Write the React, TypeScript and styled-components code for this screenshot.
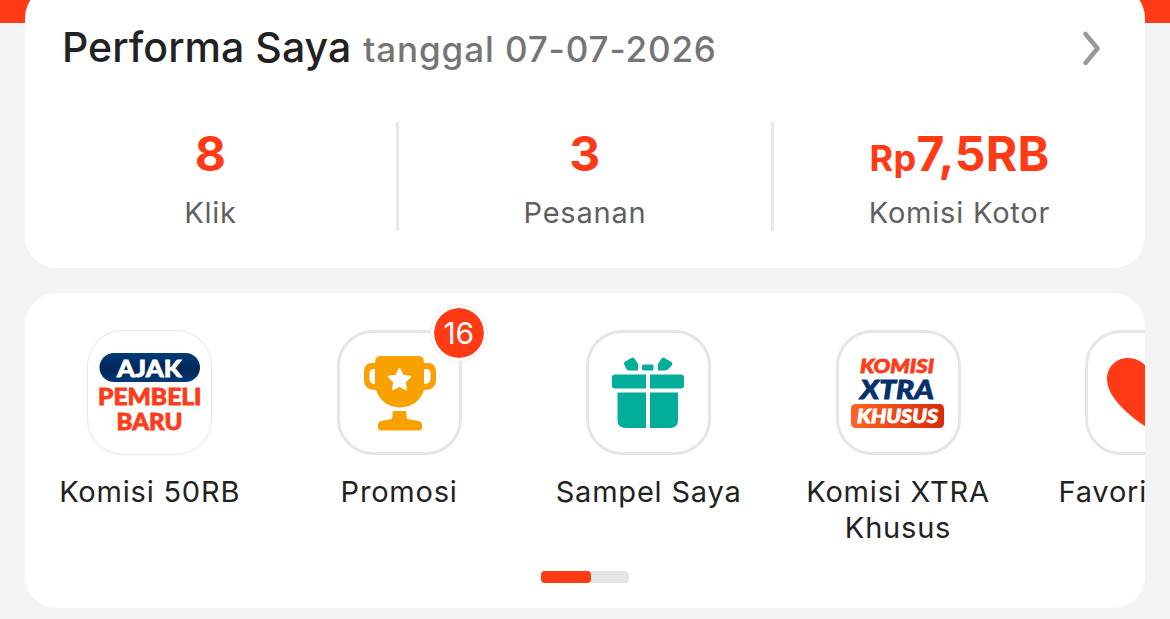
import React from 'react';
import styled, { createGlobalStyle } from 'styled-components';

const GlobalStyle = createGlobalStyle`
  * {
    box-sizing: border-box;
  }

  body {
    margin: 0;
    background-color: #f4f4f4;
    font-family: Inter, 'Liberation Sans', sans-serif;
    overflow: hidden;
  }
`;

const Page = styled.main`
  width: 1170px;
  height: 619px;
  overflow: hidden;
`;

const Hero = styled.div`
  height: 23px;
  background-color: #ff3a14;
`;

const Card = styled.section`
  margin: 0 25px;
  background-color: #fff;
  border-radius: 32px;
  overflow: hidden;
`;

const PerformanceCard = styled(Card)`
  height: 282px;
  margin-top: -37px;
  padding-top: 34px;
`;

const CardHeader = styled.header`
  display: flex;
  align-items: center;
  justify-content: space-between;
  height: 56px;
  padding: 0 44px 0 37px;
`;

const Title = styled.h1`
  margin: 0;
  color: #222;
  font-size: 41px;
  font-weight: 500;
  letter-spacing: 0.05px;
  line-height: 56px;
  white-space: nowrap;
`;

const TitleDate = styled.span`
  margin-left: 12px;
  color: #757575;
  font-size: 35px;
  letter-spacing: 0.9px;
`;

const Stats = styled.div`
  display: grid;
  grid-template-columns: 374px 375px 371px;
  height: 109px;
  margin-top: 46px;
`;

const Stat = styled.div<{ $divided?: boolean }>`
  display: flex;
  flex-direction: column;
  align-items: center;
  height: 109px;
  padding-top: 4px;
  border-right: ${({ $divided }) => ($divided ? '3px solid #e8e8e8' : 'none')};
`;

const StatValue = styled.div`
  height: 56px;
  color: #ff3a14;
  font-size: 48px;
  font-weight: 700;
  letter-spacing: 0.3px;
  line-height: 56px;
`;

const Currency = styled.span`
  font-size: 36px;
  line-height: 1;
`;

const StatLabel = styled.div`
  margin-top: 13px;
  color: #606060;
  font-size: 29px;
  letter-spacing: 0.8px;
  line-height: 36px;
`;

const MenuCard = styled(Card)`
  height: 315px;
  margin-top: 25px;
  padding-top: 37px;
`;

const MenuList = styled.div`
  display: grid;
  grid-auto-flow: column;
  grid-auto-columns: 249.45px;
  height: 241px;
`;

const MenuItem = styled.div`
  display: flex;
  flex-direction: column;
  align-items: center;
`;

const IconBox = styled.div<{ $thin?: boolean }>`
  position: relative;
  width: 125px;
  height: 125px;
  border: ${({ $thin }) => ($thin ? '1px' : '3px')} solid #e6e6e6;
  border-radius: 36px;
`;

const Icon = styled.svg<{ $thin?: boolean }>`
  display: block;
  width: 125px;
  height: 125px;
  margin: ${({ $thin }) => ($thin ? '-1px' : '-3px')};
`;

const Badge = styled.span`
  position: absolute;
  top: -28px;
  right: -28px;
  width: 56px;
  height: 56px;
  border: 3px solid #fff;
  border-radius: 50%;
  background: linear-gradient(#ff3a14, #ff3a14) padding-box, #fff border-box;
  box-shadow: 0 0 0 1px #ffe9e4;
  color: #fff;
  font-size: 30px;
  letter-spacing: -0.3px;
  line-height: 51px;
  text-align: center;
`;

const MenuLabel = styled.div`
  width: 200px;
  margin-top: 19px;
  color: #222;
  font-size: 29px;
  letter-spacing: 0.8px;
  line-height: 36px;
  text-align: center;
`;

const Track = styled.div`
  width: 88px;
  height: 12px;
  margin: 0 auto;
  border-radius: 4px;
  background-color: #e5e5e5;
`;

const Thumb = styled.div`
  width: 50px;
  height: 12px;
  border-radius: 4px;
  background-color: #ff3a14;
`;

const LogoText = styled.text`
  font-family: Lato, sans-serif;
  font-weight: 900;
  stroke: currentColor;
  stroke-width: 0.8px;
  fill: currentColor;
`;

const InviteIcon = () => (
  <Icon $thin viewBox="0 0 125 125">
    <defs>
      <linearGradient id="navy" x1="0" y1="0" x2="0" y2="1">
        <stop offset="0" stopColor="#003a78" />
        <stop offset="0.6" stopColor="#002758" />
        <stop offset="1" stopColor="#003a78" />
      </linearGradient>
    </defs>
    <rect x="12.5" y="23" width="100.5" height="29" rx="14.5" fill="url(#navy)" />
    <LogoText x="30" y="46.5" fontSize="23.5" color="#fff" textLength="64.5" lengthAdjust="spacingAndGlyphs">AJAK</LogoText>
    <LogoText x="11" y="74.7" fontSize="22.5" color="#fc3d1b" textLength="103.5" lengthAdjust="spacingAndGlyphs">PEMBELI</LogoText>
    <LogoText x="29.5" y="99.7" fontSize="22.5" color="#fc3d1b" textLength="66" lengthAdjust="spacingAndGlyphs">BARU</LogoText>
  </Icon>
);

const TrophyIcon = () => (
  <Icon viewBox="0 0 125 125">
    <path
      d="M43 26H82Q87 26 87 33H91Q99 33 99 42V50Q99 60 87 60Q81 77 63 77.5Q45 77 39 60Q27 60 27 50V42Q27 33 35 33H38Q38 26 43 26ZM38 39Q32.5 38.5 32.5 43V49Q32.5 54 38 54ZM87 39V54Q93.5 54 93.5 49V43Q93.5 38.5 87 39Z"
      fill="#f9a100"
      fillRule="evenodd"
    />
    <path
      d="M62.5 38.5L66 45.5L73.5 46.6L68 52L69.3 59.5L62.5 56L55.7 59.5L57 52L51.5 46.6L59 45.5Z"
      fill="#fff"
      stroke="#fff"
      strokeWidth="1.5"
      strokeLinejoin="round"
    />
    <path d="M56 81H69L70 89L82 91Q85 92 85 95V97.5Q85 100.5 82 100.5H44Q41 100.5 41 97.5V95Q41 92 44 91L55 89Z" fill="#f9a100" />
  </Icon>
);

const GiftIcon = () => (
  <Icon viewBox="0 0 125 125">
    <g fill="#02ad99">
      <path d="M45 28.2Q47 26.5 48.5 28.5L52 34V40.5H43Q41 40.5 39.5 37.5L38 34Q37.5 32.5 39 31.5Z" />
      <path d="M79 28.2Q77 26.5 75.5 28.5L72 34V40.5H79Q81 40.5 83 38.5L86 35Q87 33 85.5 32Z" />
      <rect x="56" y="34.5" width="11.5" height="6" rx="1.5" />
      <path d="M29 44.5H60V58.5H29Q26 58.5 26 55.5V47.5Q26 44.5 29 44.5ZM64 44.5H95Q98 44.5 98 47.5V55.5Q98 58.5 95 58.5H64Z" />
      <path d="M31.5 62.5H60V98H40Q31.5 98 31.5 90ZM64 62.5H92V90Q92 98 84 98H64Z" />
    </g>
  </Icon>
);

const XtraIcon = () => (
  <Icon viewBox="0 0 125 125">
    <defs>
      <linearGradient id="orange" x1="0" y1="0" x2="1" y2="0">
        <stop offset="0" stopColor="#ff6324" />
        <stop offset="1" stopColor="#d92b09" />
      </linearGradient>
    </defs>
    <rect x="15" y="74" width="93" height="24" rx="4.5" fill="url(#orange)" />
    <LogoText x="24" y="43.2" fontSize="18.5" fontStyle="italic" color="#fc3d1b" textLength="74" lengthAdjust="spacingAndGlyphs">KOMISI</LogoText>
    <LogoText x="24" y="68.7" fontSize="26.5" fontStyle="italic" color="#06316d" textLength="74" lengthAdjust="spacingAndGlyphs">XTRA</LogoText>
    <LogoText x="21" y="93.2" fontSize="18.5" fontStyle="italic" color="#fff" textLength="81" lengthAdjust="spacingAndGlyphs">KHUSUS</LogoText>
  </Icon>
);

const HeartIcon = () => (
  <Icon viewBox="0 0 125 125">
    <path d="M62.5 98C48 88 22 69 22 49C22 37 31 28 43 28C51 28 58 32 62.5 38C67 32 74 28 82 28C94 28 103 37 103 49C103 69 77 88 62.5 98Z" fill="#ff3a14" />
  </Icon>
);

const stats = [
  { label: 'Klik', value: '8' },
  { label: 'Pesanan', value: '3' },
  { label: 'Komisi Kotor', value: '7,5RB', currency: 'Rp' },
];

const menu = [
  { label: 'Komisi 50RB', icon: <InviteIcon />, thin: true },
  { label: 'Promosi', icon: <TrophyIcon />, badge: 16 },
  { label: 'Sampel Saya', icon: <GiftIcon /> },
  { label: 'Komisi XTRA Khusus', icon: <XtraIcon /> },
  { label: 'Favorit Saya', icon: <HeartIcon /> },
];

const App: React.FC = () => {
  return (
    <Page>
      <GlobalStyle />
      <Hero />
      <PerformanceCard>
        <CardHeader>
          <Title>
            Performa Saya
            <TitleDate>tanggal 07-07-2026</TitleDate>
          </Title>
          <svg width="19" height="34" viewBox="0 0 19 34" fill="none">
            <path d="M3.5 3L15.5 17.5L3.5 32" stroke="#999" strokeWidth="4.5" strokeLinecap="round" strokeLinejoin="round" />
          </svg>
        </CardHeader>
        <Stats>
          {stats.map((stat, index) => (
            <Stat key={stat.label} $divided={index < stats.length - 1}>
              <StatValue>
                {stat.currency && <Currency>{stat.currency}</Currency>}
                {stat.value}
              </StatValue>
              <StatLabel>{stat.label}</StatLabel>
            </Stat>
          ))}
        </Stats>
      </PerformanceCard>
      <MenuCard>
        <MenuList>
          {menu.map(item => (
            <MenuItem key={item.label}>
              <IconBox $thin={item.thin}>
                {item.icon}
                {item.badge && <Badge>{item.badge}</Badge>}
              </IconBox>
              <MenuLabel>{item.label}</MenuLabel>
            </MenuItem>
          ))}
        </MenuList>
        <Track>
          <Thumb />
        </Track>
      </MenuCard>
    </Page>
  );
};

export default App;
